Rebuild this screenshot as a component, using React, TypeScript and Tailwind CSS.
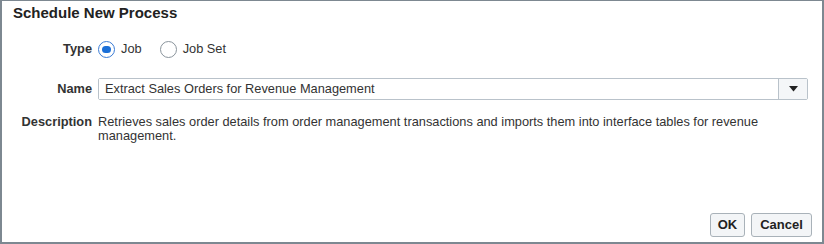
export default function App() {
  return (
    <div
      className="w-[824px] h-[244px] bg-white border-l-2 border-t border-r-2 border-b-2 border-[#7d8891] flex flex-col text-[#333] text-[12.8px]"
      style={{ fontFamily: '"Liberation Sans", Arial, sans-serif' }}
    >
      <div className="pl-[11px] pt-[3px] text-[15px] leading-[18px] font-bold text-[#222]">Schedule New Process</div>

      <div className="flex flex-col pt-[16px]">
        {/* Type */}
        <div className="flex items-center h-[22px]">
          <div className="w-[96px] text-right font-bold pr-[6px]">Type</div>
          <label className="flex items-center gap-[6px]">
            <span className="w-[17px] h-[17px] rounded-full border border-[#3a7bd5] flex items-center justify-center bg-white">
              <span className="w-[9px] h-[7px] rounded-full bg-[#1a6fd8]" />
            </span>
            <span>Job</span>
          </label>
          <label className="flex items-center gap-[6px] ml-[18px]">
            <span className="w-[17px] h-[17px] rounded-full border border-[#8a949c] bg-white" />
            <span>Job Set</span>
          </label>
        </div>

        {/* Name */}
        <div className="flex items-center mt-[18px]">
          <div className="w-[96px] text-right font-bold pr-[6px]">Name</div>
          <div className="flex h-[22px] w-[710px] border border-[#b9c2ca] rounded-[2px]">
            <div className="flex-1 flex items-center pl-[6px] bg-white">Extract Sales Orders for Revenue Management</div>
            <div className="w-[29px] border-l border-[#b9c2ca] bg-[#f4f6f8] flex items-center justify-center">
              <svg width="9" height="6" viewBox="0 0 9 6">
                <path d="M0 0 L9 0 L4.5 5.5 Z" fill="#222" />
              </svg>
            </div>
          </div>
        </div>

        {/* Description */}
        <div className="flex mt-[15px]">
          <div className="w-[96px] text-right font-bold pr-[6px] leading-[14px]">Description</div>
          <div className="w-[700px] leading-[14px]">
            Retrieves sales order details from order management transactions and imports them into interface tables for revenue management.
          </div>
        </div>
      </div>

      <div className="flex-1" />
      <div className="flex justify-end gap-[6px] pr-[10px] pb-[5px]">
        <button className="h-[24px] w-[35px] border border-[#a9b2b9] rounded-[3px] bg-[#f3f5f7] font-bold text-[#222] text-[13px]">OK</button>
        <button className="h-[24px] w-[61px] border border-[#a9b2b9] rounded-[3px] bg-[#f3f5f7] font-bold text-[#222] text-[13px]">Cancel</button>
      </div>
    </div>
  );
}
